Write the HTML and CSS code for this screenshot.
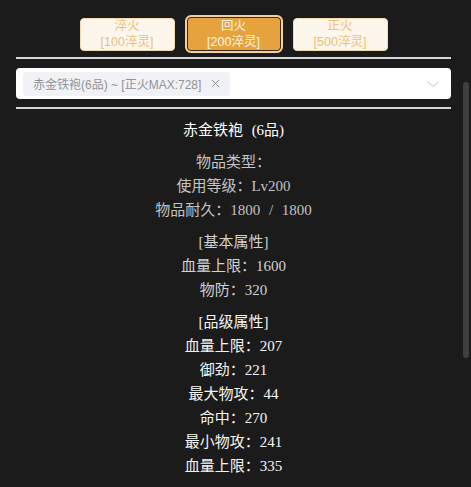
FILE: index.html
```html
<!DOCTYPE html>
<html lang="zh-CN">
<head>
<meta charset="utf-8">
<title>装备淬火</title>
<link rel="stylesheet" href="styles.css">
</head>
<body>
<div class="page">
  <div class="tabs">
    <button class="tab"><span>淬火</span><span>[100淬灵]</span></button>
    <button class="tab active"><span>回火</span><span>[200淬灵]</span></button>
    <button class="tab"><span>正火</span><span>[500淬灵]</span></button>
  </div>
  <div class="rule"></div>
  <div class="select">
    <span class="tag">
      <span class="tag-text">赤金铁袍(6品) ~ [正火MAX:728]</span>
      <svg class="tag-close" viewBox="0 0 10 10" width="9" height="9"><path d="M1 1 L9 9 M9 1 L1 9" stroke="#909399" stroke-width="1.1" fill="none"/></svg>
    </span>
    <svg class="chev" viewBox="0 0 12 6" width="12" height="6"><path d="M0.5 0.5 L6 5.5 L11.5 0.5" stroke="#c0c4cc" stroke-width="1" fill="none"/></svg>
  </div>
  <div class="rule"></div>
  <div class="info">
    <div class="title">赤金铁袍 (6品)</div>
    <div class="group muted">
      <div class="line">物品类型：</div>
      <div class="line">使用等级：Lv200</div>
      <div class="line">物品耐久：1800 / 1800</div>
    </div>
    <div class="group normal">
      <div class="line">[基本属性]</div>
      <div class="line">血量上限：1600</div>
      <div class="line">物防：320</div>
    </div>
    <div class="group bright">
      <div class="line">[品级属性]</div>
      <div class="line">血量上限：207</div>
      <div class="line">御劲：221</div>
      <div class="line">最大物攻：44</div>
      <div class="line">命中：270</div>
      <div class="line">最小物攻：241</div>
      <div class="line">血量上限：335</div>
    </div>
  </div>
</div>
<div class="scroll-thumb"></div>
</body>
</html>
```

FILE: styles.css
```css
html, body {
  margin: 0;
  padding: 0;
  background: #1b1b1b;
  overflow: hidden;
}

.page {
  width: 435px;
  margin-left: 16px;
  padding-top: 15px;
}

.tabs {
  display: flex;
  justify-content: center;
  align-items: center;
  gap: 10px;
  height: 38px;
}

.tab {
  box-sizing: border-box;
  width: 95px;
  height: 33px;
  padding: 0;
  border: 1px solid #f5dab1;
  border-radius: 4px;
  background: #fdf6ec;
  color: #eebe77;
  font-family: "Liberation Sans", "Noto Sans CJK SC", sans-serif;
  font-size: 12.5px;
  line-height: 16px;
  display: flex;
  flex-direction: column;
  align-items: center;
  justify-content: center;
}

.tab.active {
  width: 98px;
  height: 38px;
  border: 2px solid #f3d19e;
  border-radius: 6px;
  background: #e6a23c;
  color: #fdf6ec;
  box-shadow: inset 0 0 0 1px #3a2a12;
}

.rule {
  height: 2px;
  background: #d6d6d6;
  margin-top: 4px;
}

.select {
  box-sizing: border-box;
  height: 31px;
  margin-top: 9px;
  margin-bottom: 8px;
  background: #ffffff;
  border-radius: 4px;
  display: flex;
  align-items: center;
  justify-content: space-between;
  padding: 0 12px 0 7px;
}

.select + .rule {
  margin-top: 0;
}

.tag {
  height: 24px;
  box-sizing: border-box;
  display: flex;
  align-items: center;
  padding: 0 10px 0 10px;
  background: #f0f2f5;
  border-radius: 4px;
  color: #909399;
  font-family: "Liberation Sans", "Noto Sans CJK SC", sans-serif;
  font-size: 12px;
}

.tag-close {
  margin-left: 10px;
}

.chev {
  display: block;
}

.info {
  padding-top: 9px;
  text-align: center;
  font-family: "Liberation Serif", "Noto Sans CJK SC", serif;
  font-size: 15px;
  line-height: 24px;
  word-spacing: 5px;
}

.title {
  color: #ffffff;
}

.group {
  margin-top: 8px;
}

.muted {
  color: #c4c4c4;
}

.normal {
  color: #d2d2d2;
}

.bright {
  color: #f7f7f7;
}

.scroll-thumb {
  position: fixed;
  right: 2px;
  top: 82px;
  width: 6px;
  height: 276px;
  border-radius: 3px;
  background: #3e3e3e;
}
```
